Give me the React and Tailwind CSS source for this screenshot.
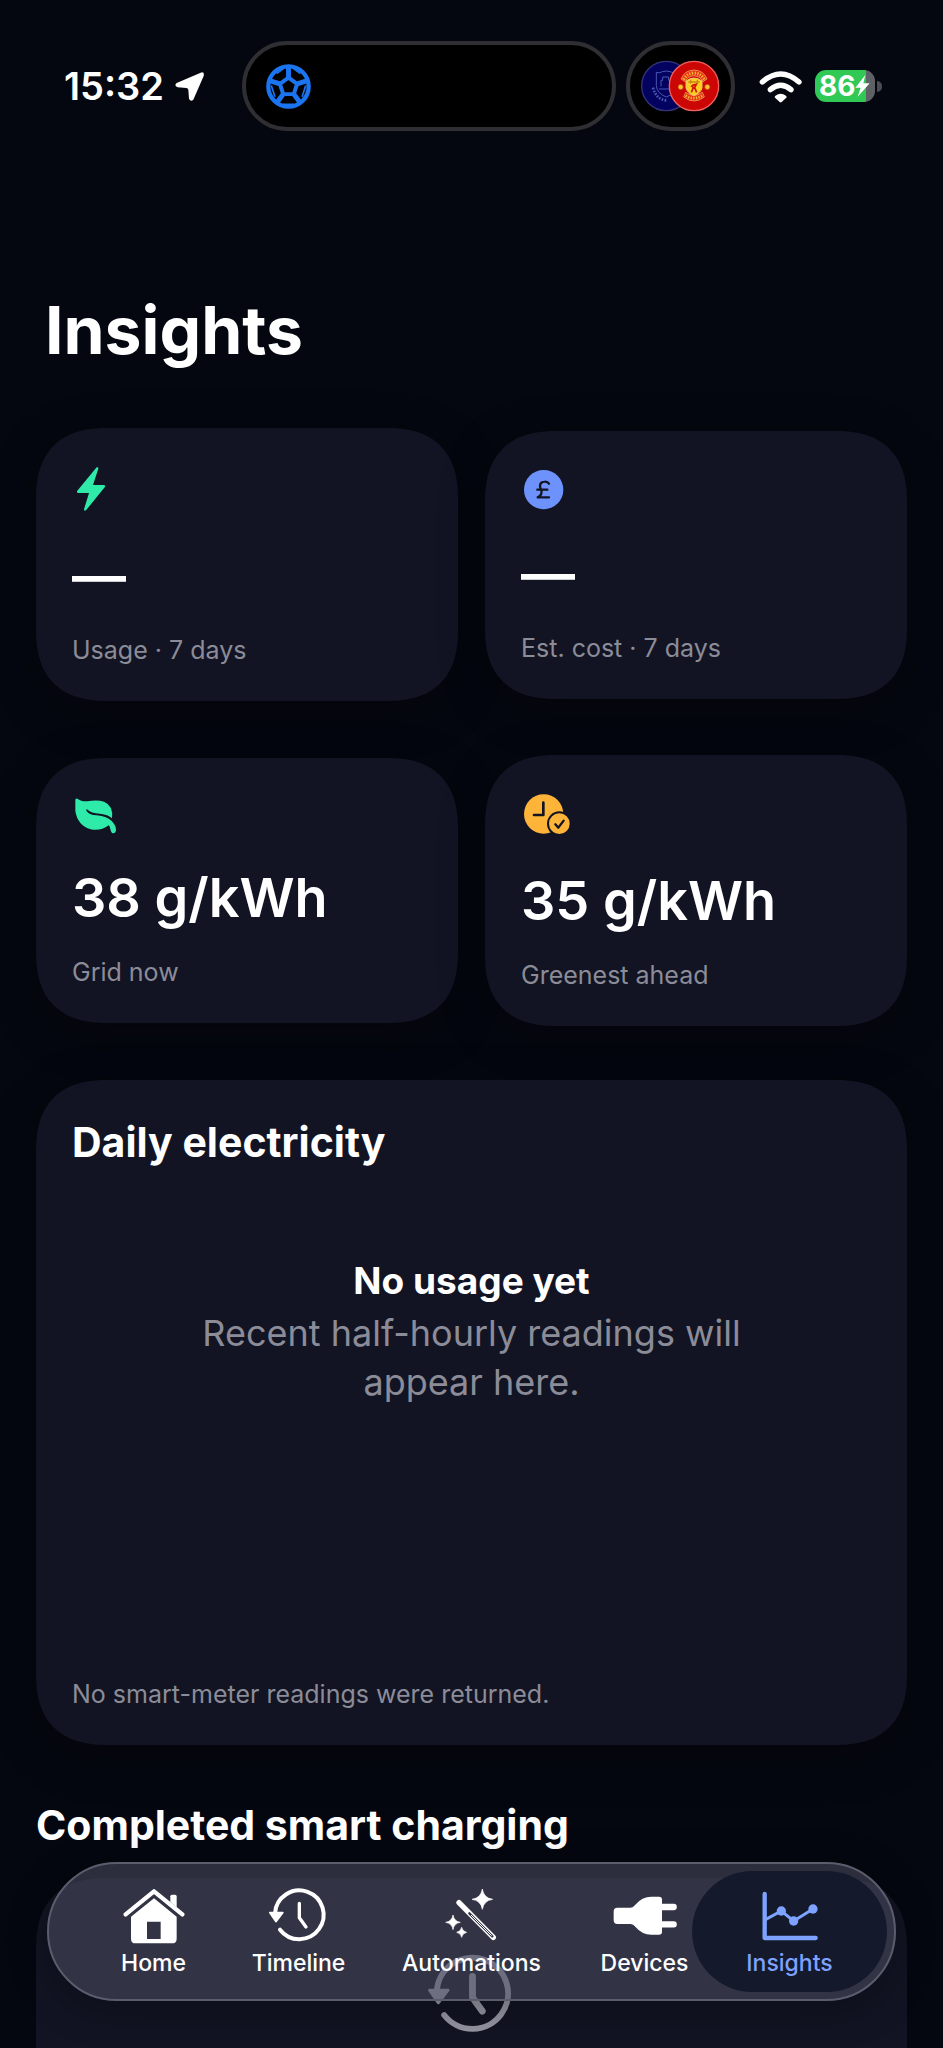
import React from 'react';

const StatusBar = () => {
  return (
    <header className="flex items-center pt-[41px]">
      <div className="flex w-[242px] items-center gap-[10px] pl-16">
        <span className="text-[38px] leading-[48px] font-semibold">15:32</span>
        <svg className="h-[31px] w-[31px]" viewBox="517 153 93 93" aria-hidden="true">
          <path
            d="M597 158 Q609 154 606 168 L575 239 Q567 247 562 236 L560 209 Q559 204 554 204 L528 202 Q516 197 525 189 Z"
            fill="#fff"
          />
        </svg>
      </div>

      {/* Dynamic island */}
      <div className="flex h-[90px] flex-1 items-center rounded-full border-4 border-[#2e2e33] bg-black pl-5">
        <svg className="h-[45px] w-[45px]" viewBox="797 131 136 136" fill="none" stroke="#1b74f0" aria-hidden="true">
          <circle cx="865" cy="199" r="61" strokeWidth="13" />
          <path
            d="M865 172 L891 191 L881 222 L849 222 L839 191 Z"
            strokeWidth="12"
            strokeLinejoin="round"
          />
          <path
            d="M865 172 V139 M891 191 L922 181 M881 222 L901 249 M849 222 L829 249 M839 191 L808 181"
            strokeWidth="15"
          />
          <path
            d="M850 145 L829 160 M880 145 L901 160 M917 196 L906 230 M813 196 L824 230 M848 253 H882"
            strokeWidth="5"
          />
        </svg>
      </div>

      <div className="ml-[10px] flex h-[90px] w-[109px] items-center justify-center rounded-full border-4 border-[#2e2e33] bg-black">
        <svg className="h-[52px] w-[79px]" viewBox="536 121 237 156" aria-hidden="true">
          <circle cx="612" cy="199" r="74" fill="#03035f" stroke="#34347c" strokeWidth="4" />
          <g fill="none" stroke="#4a57b4" strokeWidth="3">
            <path d="M582 158 Q592 162 600 156 Q612 152 624 156 Q632 162 642 158 V198 Q640 222 612 232 Q584 222 582 198 Z" />
            <path d="M596 200 V182 H601 V172 H619 V182 H624 V200 M590 208 H622" />
            <path d="M572 204 Q582 240 612 242" strokeWidth="8" strokeDasharray="5 4" />
          </g>
          <circle cx="695" cy="199" r="74" fill="#cc0605" stroke="#f0605c" strokeWidth="4" />
          <path
            d="M656 178 Q666 152 695 151 Q724 152 734 178 L722 186 Q714 170 695 168 Q676 170 668 186 Z M670 218 Q695 236 720 218 L726 232 Q695 256 664 232 Z"
            fill="#e8331a"
            stroke="#efc46a"
            strokeWidth="2"
          />
          <path d="M664 180 Q674 161 695 160 Q716 161 726 180" fill="none" stroke="#f9b52c" strokeWidth="9" strokeDasharray="4 4" />
          <path d="M670 228 Q695 243 720 228" fill="none" stroke="#f9b52c" strokeWidth="8" strokeDasharray="4 4" />
          <path d="M671 184 Q695 166 719 184 V205 Q715 220 695 228 Q675 220 671 205 Z" fill="#fbd021" stroke="#efc46a" strokeWidth="3" />
          <path d="M678 187 H712 M685 180 V192 M705 180 V192" stroke="#c9871a" strokeWidth="4" />
          <path d="M690 197 L702 194 L697 204 L703 218 M693 204 L687 218 M686 198 L700 208" stroke="#d3140c" strokeWidth="5" fill="none" />
          <circle cx="655" cy="202" r="8" fill="#f7c22c" stroke="#c2280f" strokeWidth="2" />
          <circle cx="735" cy="202" r="8" fill="#f7c22c" stroke="#c2280f" strokeWidth="2" />
        </svg>
      </div>

      <div className="flex w-[208px] items-center gap-[13px] pl-[24px]">
        <svg className="h-[33px] w-[43px]" viewBox="888 145 129 99" fill="none" stroke="#fff" aria-hidden="true">
          <path d="M898 181 Q953 133 1008 181" strokeWidth="16" strokeLinecap="round" />
          <path d="M922 204 Q953 178 984 204" strokeWidth="16" strokeLinecap="round" />
          <path d="M940 226 Q953 216 966 226 L953 238 Z" fill="#fff" strokeWidth="9" strokeLinejoin="round" />
        </svg>
        <div className="flex items-center gap-[2px]">
          <div className="flex h-8 w-[60px] items-center overflow-hidden rounded-[11px] bg-gradient-to-r from-[#30c955] from-85% to-[#5f5f66] to-85% pl-1">
            <span className="text-[28px] leading-8 font-bold">86</span>
            <svg className="h-[22px] w-[15px]" viewBox="1182 165 45 66" aria-hidden="true">
              <path d="M1213 165 L1183 203 H1199 L1190 230 L1226 190 H1207 Z" fill="#fff" />
            </svg>
          </div>
          <div className="h-[11px] w-[5px] rounded-r-full bg-[#4b4b52]"></div>
        </div>
      </div>
    </header>
  );
};

const BoltIcon = () => (
  <svg className="h-[50px] w-[38px]" viewBox="216 549 114 150" aria-hidden="true">
    <path
      d="M290 559 Q296 557 295 563 L279 612 H312 Q318 614 314 619 L258 688 Q252 692 252 685 L267 636 H234 Q229 634 232 629 Z"
      fill="#2eebaa"
    />
  </svg>
);

const PoundIcon = () => (
  <svg className="h-[45px] w-[46px]" viewBox="150 167 138 135" aria-hidden="true">
    <circle cx="218" cy="235" r="59" fill="#6d92fc" />
    <path
      d="M234 217 Q229 210 221 211 Q207 212 207 224 Q207 230 211 237 Q215 250 200 258 H234 M199 235 H229"
      fill="none"
      stroke="#121423"
      strokeWidth="7"
      strokeLinecap="round"
      strokeLinejoin="round"
    />
  </svg>
);

const LeafIcon = () => (
  <svg className="h-[42px] w-[47px]" viewBox="216 189 141 126" aria-hidden="true">
    <path
      d="M226 206 Q228 200 234 204 Q243 212 262 211 Q292 206 312 212 Q341 224 336 262 Q328 252 300 248 Q272 246 263 236 Q258 233 259 239 Q266 251 290 253 Q322 257 335 270 Q349 284 348 299 Q345 309 336 306 Q332 302 331 294 Q329 284 326 283 Q302 301 272 295 Q233 284 226 240 Z"
      fill="#2eebaa"
    />
  </svg>
);

const ClockCheckIcon = () => (
  <svg className="h-[48px] w-[50px]" viewBox="150 180 150 144" aria-hidden="true">
    <circle cx="218" cy="249" r="59" fill="#fdb438" />
    <path d="M217 215 V252 H189" fill="none" stroke="#121423" strokeWidth="8" strokeLinecap="round" strokeLinejoin="round" />
    <circle cx="265" cy="278" r="34" fill="#fdb438" stroke="#121423" strokeWidth="6" />
    <path d="M253 280 L262 290 L278 269" fill="none" stroke="#121423" strokeWidth="7" strokeLinecap="round" strokeLinejoin="round" />
  </svg>
);

const HistoryIcon = ({ className, hand = 10 }) => (
  <svg className={className} viewBox="805 112 180 168" fill="none" stroke="currentColor" overflow="visible" aria-hidden="true">
    <path d="M823 188 A73 73 0 1 1 838 237" strokeWidth="12" strokeLinecap="round" />
    <path d="M896 158 V201 L916 229" strokeWidth={hand} strokeLinecap="round" strokeLinejoin="round" />
    <path d="M808 186 H846 L826 212 Z" fill="currentColor" strokeWidth="6" strokeLinejoin="round" />
  </svg>
);

const HomeIcon = () => (
  <svg className="h-[56px] w-[62px]" viewBox="367 112 186 168" aria-hidden="true">
    <path d="M375 191 L460 122 L545 191" fill="none" stroke="#fff" strokeWidth="13" strokeLinecap="round" strokeLinejoin="round" />
    <path d="M509 154 V137 Q509 132 514 132 H523 Q528 132 528 137 V170 Z" fill="#fff" />
    <path
      d="M460 143 L528 198 V264 Q528 278 514 278 H405 Q391 278 391 264 V198 Z M439 213 V265 H480 V213 Z"
      fill="#fff"
      fillRule="evenodd"
    />
  </svg>
);

const WandIcon = () => (
  <svg className="h-[56px] w-[56px]" viewBox="1329 112 168 168" aria-hidden="true">
    <path d="M1374 156 L1477 260" stroke="#fff" strokeWidth="16" strokeLinecap="round" />
    <path d="M1405 188 L1474 257" stroke="#323447" strokeWidth="7" strokeLinecap="round" />
    <path d="M1410 193 L1472 255" stroke="#fff" strokeWidth="3" />
    <path
      d="M1444 115 Q1448 142 1475 146 Q1448 150 1444 176 Q1440 150 1413 146 Q1440 142 1444 115 Z M1356 193 Q1359 212 1378 215 Q1359 218 1356 237 Q1353 218 1334 215 Q1353 212 1356 193 Z M1382 230 Q1384 242 1397 245 Q1384 248 1382 260 Q1380 248 1367 245 Q1380 242 1382 230 Z"
      fill="#fff"
      stroke="#fff"
      strokeWidth="2"
    />
  </svg>
);

const PlugIcon = () => (
  <svg className="h-[56px] w-[64px]" viewBox="447 112 192 168" aria-hidden="true">
    <path
      d="M460 171 H500 Q508 170 514 162 Q534 138 562 138 H585 Q594 138 594 147 V243 Q594 252 585 252 H562 Q534 252 514 228 Q508 220 500 220 H460 Q449 220 449 209 V182 Q449 171 460 171 Z"
      fill="#fff"
    />
    <path d="M594 169 H629 M594 221 H629" stroke="#fff" strokeWidth="19" strokeLinecap="round" />
  </svg>
);

const ChartIcon = () => (
  <svg className="h-[56px] w-[56px]" viewBox="895 112 168 168" fill="none" stroke="#7ea2ff" aria-hidden="true">
    <path d="M903 130 V262 H1056" strokeWidth="13" strokeLinecap="round" strokeLinejoin="round" />
    <path d="M905 207 L953 181 L990 211 L1048 175" strokeWidth="9" />
    <g fill="#7ea2ff" stroke="none">
      <circle cx="953" cy="181" r="14" />
      <circle cx="990" cy="211" r="14" />
      <circle cx="1048" cy="175" r="14" />
    </g>
  </svg>
);

const stats = [
  { icon: <BoltIcon />, value: '—', label: 'Usage · 7 days' },
  { icon: <PoundIcon />, value: '—', label: 'Est. cost · 7 days' },
  { icon: <LeafIcon />, value: '38 g/kWh', label: 'Grid now' },
  { icon: <ClockCheckIcon />, value: '35 g/kWh', label: 'Greenest ahead' },
];

const tabs = [
  { name: 'Home', icon: <HomeIcon /> },
  { name: 'Timeline', icon: <HistoryIcon className="h-[56px] w-[60px]" /> },
  { name: 'Automations', icon: <WandIcon /> },
  { name: 'Devices', icon: <PlugIcon /> },
  { name: 'Insights', icon: <ChartIcon />, active: true },
];

const StatCard = ({ icon, value, label }) => {
  return (
    <div className="rounded-[72px] bg-[#121423] p-9 shadow-[0_12px_48px_rgba(0,0,0,0.3)] [corner-shape:superellipse(1.3)]">
      {icon}
      <p className="mt-7 text-[54px] leading-[67px] font-semibold">{value}</p>
      <p className="mt-[26px] text-[25px] leading-[30px] text-[#8b8c98]">{label}</p>
    </div>
  );
};

const TabBar = () => {
  return (
    <nav className="absolute inset-x-[47px] bottom-[47px] grid h-[139px] grid-cols-[145fr_145fr_201fr_145fr_145fr] rounded-full border-2 border-[#5b5d6d] bg-[#4c4e65]/55 px-8 shadow-[0_8px_40px_rgba(0,0,0,0.3)]">
      {tabs.map((tab) => (
        <a key={tab.name} href="#" className="relative flex flex-col items-center pt-6">
          {tab.active && <span className="absolute -inset-x-[25px] inset-y-[7px] rounded-full bg-[#15192c]"></span>}
          <span className="relative">{tab.icon}</span>
          <span
            className={
              tab.active
                ? 'relative mt-[5px] text-[23px] leading-7 font-medium text-[#7ea2ff]'
                : 'relative mt-[5px] text-[23px] leading-7 font-medium text-white'
            }
          >
            {tab.name}
          </span>
        </a>
      ))}
    </nav>
  );
};

const InsightsPage = () => {
  return (
    <div className="relative flex h-screen flex-col overflow-hidden bg-[#050710] font-['Inter',sans-serif] text-white">
      <StatusBar />

      <main className="flex flex-1 flex-col px-9">
        <h1 className="mt-[157px] px-[9px] text-[66px] leading-[84px] font-bold">Insights</h1>

        {/* Stats */}
        <div className="mt-14 grid grid-cols-2 items-center gap-x-[27px] gap-y-[54px]">
          {stats.map((stat) => (
            <StatCard key={stat.label} icon={stat.icon} value={stat.value} label={stat.label} />
          ))}
        </div>

        {/* Daily electricity */}
        <section className="mt-[54px] rounded-[72px] bg-[#121423] p-9 shadow-[0_12px_48px_rgba(0,0,0,0.3)] [corner-shape:superellipse(1.3)]">
          <h2 className="text-[41px] leading-[52px] font-bold">Daily electricity</h2>
          <div className="mx-auto mt-[88px] min-h-[423px] max-w-[560px] text-center leading-[49px]">
            <h3 className="mb-1 text-[37px] leading-[49px] font-bold">No usage yet</h3>
            <p className="text-[36px] leading-[49px] text-[#8b8c98]">Recent half-hourly readings will appear here.</p>
          </div>
          <p className="text-[25px] leading-[30px] text-[#8b8c98]">No smart-meter readings were returned.</p>
        </section>

        {/* Completed smart charging */}
        <h2 className="mt-[54px] text-[41px] leading-[52px] font-bold">Completed smart charging</h2>
        <section className="mt-[27px] flex flex-1 justify-center rounded-t-[72px] bg-[#121423] pt-[76px] [corner-shape:superellipse(1.3)]">
          <HistoryIcon className="h-[82px] w-[88px] text-[#9596a2]" hand={14} />
        </section>
      </main>

      <TabBar />
    </div>
  );
};

export default function App() {
  return <InsightsPage />;
}
